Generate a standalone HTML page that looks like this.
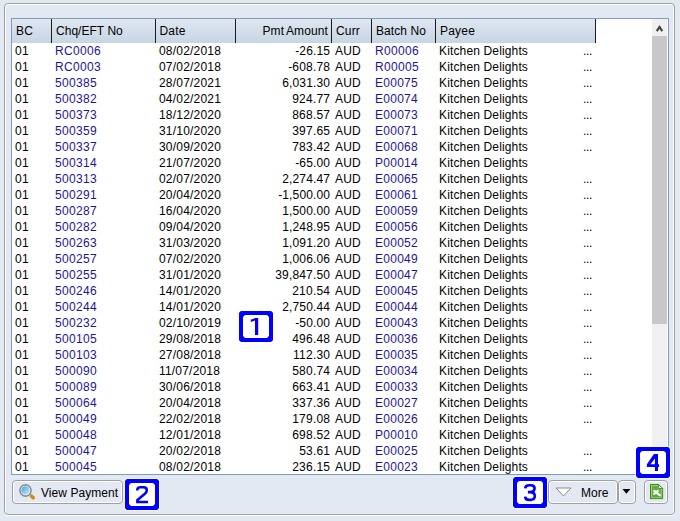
<!DOCTYPE html>
<html><head><meta charset="utf-8">
<style>
html,body{margin:0;padding:0;}
body{width:680px;height:521px;overflow:hidden;position:relative;background:#e3e9f2;font-family:"Liberation Sans",sans-serif;font-size:12px;color:#000;}
.abs{position:absolute;}
.panel{position:absolute;left:4px;top:3px;width:669px;height:510px;border:1px solid #a0a0a0;border-radius:4px;box-shadow:inset 1px 1px 0 #fff, inset -1px 0 0 #fff, 0 1px 0 #fff;}
.table{position:absolute;left:11px;top:18px;width:656px;height:455px;border:1px solid #7f9db9;background:#fff;}
.hdr{position:absolute;left:12px;top:19px;width:584px;height:24px;background:linear-gradient(#e0e7f0,#c6d5e4);}
.div{position:absolute;top:19px;width:1px;height:24px;background:#1c1c1c;}
.row{position:absolute;left:0;width:680px;height:16px;}
.row span{position:absolute;top:0;line-height:16px;white-space:nowrap;}
.hrow span{line-height:24px;}
.b{color:#1c1596;}
.sb{position:absolute;left:652px;top:19px;width:15px;height:455px;background:#f0f0f0;}
.thumb{position:absolute;left:652px;top:36px;width:15px;height:288px;background:#c8c8c8;}
.btn{position:absolute;top:480px;height:22px;border:1px solid #a0a0a0;border-radius:4px;box-shadow:inset 0 0 0 1px #fff;background:#e3e9f2;}
.lbl{position:absolute;top:481px;line-height:22px;white-space:nowrap;}
.badge{position:absolute;}
.bnum{position:absolute;width:34px;height:31px;text-align:center;line-height:31px;font-weight:bold;font-size:24px;color:#00f;}
</style></head><body>
<div class="panel"></div>
<div class="table"></div>
<div class="hdr"></div>
<div class="div" style="left:51px"></div>
<div class="div" style="left:155px"></div>
<div class="div" style="left:235px"></div>
<div class="div" style="left:331px"></div>
<div class="div" style="left:371px"></div>
<div class="div" style="left:435px"></div>
<div class="div" style="left:595px"></div>
<div class="row hrow" style="top:19px;height:24px">
<span style="left:16px;letter-spacing:0.165px;">BC</span><span style="left:56px;letter-spacing:0.031px;">Chq/EFT No</span><span style="left:159.5px;letter-spacing:0.163px;">Date</span><span style="right:352.002px;letter-spacing:-0.002px;word-spacing:-1px;letter-spacing:0.12px;">Pmt Amount</span><span style="left:336px;letter-spacing:0.167px;">Curr</span><span style="left:376px;letter-spacing:0.08px;">Batch No</span><span style="left:440px;letter-spacing:0.195px;">Payee</span>
</div>
<div class="row" style="top:43px"><span style="left:15px;letter-spacing:0.326px;">01</span><span class="b" style="left:55px;letter-spacing:0.329px;">RC0006</span><span style="left:159px;letter-spacing:0.194px;">08/02/2018</span><span style="right:349.838px;letter-spacing:0.162px;">-26.15</span><span style="left:335px;letter-spacing:0.221px;">AUD</span><span class="b" style="left:375px;letter-spacing:0.327px;">R00006</span><span style="left:439px;letter-spacing:0.143px;">Kitchen Delights</span><span style="left:583px;letter-spacing:-0.334px;">...</span></div><div class="row" style="top:59px"><span style="left:15px;letter-spacing:0.326px;">01</span><span class="b" style="left:55px;letter-spacing:0.329px;">RC0003</span><span style="left:159px;letter-spacing:0.194px;">07/02/2018</span><span style="right:349.814px;letter-spacing:0.186px;">-608.78</span><span style="left:335px;letter-spacing:0.221px;">AUD</span><span class="b" style="left:375px;letter-spacing:0.327px;">R00005</span><span style="left:439px;letter-spacing:0.143px;">Kitchen Delights</span><span style="left:583px;letter-spacing:-0.334px;">...</span></div><div class="row" style="top:75px"><span style="left:15px;letter-spacing:0.326px;">01</span><span class="b" style="left:55px;letter-spacing:0.326px;">500385</span><span style="left:159px;letter-spacing:0.194px;">28/07/2021</span><span style="right:349.839px;letter-spacing:0.161px;">6,031.30</span><span style="left:335px;letter-spacing:0.221px;">AUD</span><span class="b" style="left:375px;letter-spacing:0.271px;">E00075</span><span style="left:439px;letter-spacing:0.143px;">Kitchen Delights</span><span style="left:583px;letter-spacing:-0.334px;">...</span></div><div class="row" style="top:91px"><span style="left:15px;letter-spacing:0.326px;">01</span><span class="b" style="left:55px;letter-spacing:0.326px;">500382</span><span style="left:159px;letter-spacing:0.194px;">04/02/2021</span><span style="right:349.784px;letter-spacing:0.216px;">924.77</span><span style="left:335px;letter-spacing:0.221px;">AUD</span><span class="b" style="left:375px;letter-spacing:0.271px;">E00074</span><span style="left:439px;letter-spacing:0.143px;">Kitchen Delights</span><span style="left:583px;letter-spacing:-0.334px;">...</span></div><div class="row" style="top:107px"><span style="left:15px;letter-spacing:0.326px;">01</span><span class="b" style="left:55px;letter-spacing:0.326px;">500373</span><span style="left:159px;letter-spacing:0.194px;">18/12/2020</span><span style="right:349.784px;letter-spacing:0.216px;">868.57</span><span style="left:335px;letter-spacing:0.221px;">AUD</span><span class="b" style="left:375px;letter-spacing:0.271px;">E00073</span><span style="left:439px;letter-spacing:0.143px;">Kitchen Delights</span><span style="left:583px;letter-spacing:-0.334px;">...</span></div><div class="row" style="top:123px"><span style="left:15px;letter-spacing:0.326px;">01</span><span class="b" style="left:55px;letter-spacing:0.326px;">500359</span><span style="left:159px;letter-spacing:0.194px;">31/10/2020</span><span style="right:349.784px;letter-spacing:0.216px;">397.65</span><span style="left:335px;letter-spacing:0.221px;">AUD</span><span class="b" style="left:375px;letter-spacing:0.271px;">E00071</span><span style="left:439px;letter-spacing:0.143px;">Kitchen Delights</span><span style="left:583px;letter-spacing:-0.334px;">...</span></div><div class="row" style="top:139px"><span style="left:15px;letter-spacing:0.326px;">01</span><span class="b" style="left:55px;letter-spacing:0.326px;">500337</span><span style="left:159px;letter-spacing:0.194px;">30/09/2020</span><span style="right:349.784px;letter-spacing:0.216px;">783.42</span><span style="left:335px;letter-spacing:0.221px;">AUD</span><span class="b" style="left:375px;letter-spacing:0.271px;">E00068</span><span style="left:439px;letter-spacing:0.143px;">Kitchen Delights</span><span style="left:583px;letter-spacing:-0.334px;">...</span></div><div class="row" style="top:155px"><span style="left:15px;letter-spacing:0.326px;">01</span><span class="b" style="left:55px;letter-spacing:0.326px;">500314</span><span style="left:159px;letter-spacing:0.194px;">21/07/2020</span><span style="right:349.838px;letter-spacing:0.162px;">-65.00</span><span style="left:335px;letter-spacing:0.221px;">AUD</span><span class="b" style="left:375px;letter-spacing:0.271px;">P00014</span><span style="left:439px;letter-spacing:0.143px;">Kitchen Delights</span></div><div class="row" style="top:171px"><span style="left:15px;letter-spacing:0.326px;">01</span><span class="b" style="left:55px;letter-spacing:0.326px;">500313</span><span style="left:159px;letter-spacing:0.194px;">02/07/2020</span><span style="right:349.839px;letter-spacing:0.161px;">2,274.47</span><span style="left:335px;letter-spacing:0.221px;">AUD</span><span class="b" style="left:375px;letter-spacing:0.271px;">E00065</span><span style="left:439px;letter-spacing:0.143px;">Kitchen Delights</span><span style="left:583px;letter-spacing:-0.334px;">...</span></div><div class="row" style="top:187px"><span style="left:15px;letter-spacing:0.326px;">01</span><span class="b" style="left:55px;letter-spacing:0.326px;">500291</span><span style="left:159px;letter-spacing:0.194px;">20/04/2020</span><span style="right:349.856px;letter-spacing:0.144px;">-1,500.00</span><span style="left:335px;letter-spacing:0.221px;">AUD</span><span class="b" style="left:375px;letter-spacing:0.271px;">E00061</span><span style="left:439px;letter-spacing:0.143px;">Kitchen Delights</span><span style="left:583px;letter-spacing:-0.334px;">...</span></div><div class="row" style="top:203px"><span style="left:15px;letter-spacing:0.326px;">01</span><span class="b" style="left:55px;letter-spacing:0.326px;">500287</span><span style="left:159px;letter-spacing:0.194px;">16/04/2020</span><span style="right:349.839px;letter-spacing:0.161px;">1,500.00</span><span style="left:335px;letter-spacing:0.221px;">AUD</span><span class="b" style="left:375px;letter-spacing:0.271px;">E00059</span><span style="left:439px;letter-spacing:0.143px;">Kitchen Delights</span><span style="left:583px;letter-spacing:-0.334px;">...</span></div><div class="row" style="top:219px"><span style="left:15px;letter-spacing:0.326px;">01</span><span class="b" style="left:55px;letter-spacing:0.326px;">500282</span><span style="left:159px;letter-spacing:0.194px;">09/04/2020</span><span style="right:349.839px;letter-spacing:0.161px;">1,248.95</span><span style="left:335px;letter-spacing:0.221px;">AUD</span><span class="b" style="left:375px;letter-spacing:0.271px;">E00056</span><span style="left:439px;letter-spacing:0.143px;">Kitchen Delights</span><span style="left:583px;letter-spacing:-0.334px;">...</span></div><div class="row" style="top:235px"><span style="left:15px;letter-spacing:0.326px;">01</span><span class="b" style="left:55px;letter-spacing:0.326px;">500263</span><span style="left:159px;letter-spacing:0.194px;">31/03/2020</span><span style="right:349.839px;letter-spacing:0.161px;">1,091.20</span><span style="left:335px;letter-spacing:0.221px;">AUD</span><span class="b" style="left:375px;letter-spacing:0.271px;">E00052</span><span style="left:439px;letter-spacing:0.143px;">Kitchen Delights</span><span style="left:583px;letter-spacing:-0.334px;">...</span></div><div class="row" style="top:251px"><span style="left:15px;letter-spacing:0.326px;">01</span><span class="b" style="left:55px;letter-spacing:0.326px;">500257</span><span style="left:159px;letter-spacing:0.194px;">07/02/2020</span><span style="right:349.839px;letter-spacing:0.161px;">1,006.06</span><span style="left:335px;letter-spacing:0.221px;">AUD</span><span class="b" style="left:375px;letter-spacing:0.271px;">E00049</span><span style="left:439px;letter-spacing:0.143px;">Kitchen Delights</span><span style="left:583px;letter-spacing:-0.334px;">...</span></div><div class="row" style="top:267px"><span style="left:15px;letter-spacing:0.326px;">01</span><span class="b" style="left:55px;letter-spacing:0.326px;">500255</span><span style="left:159px;letter-spacing:0.194px;">31/01/2020</span><span style="right:349.821px;letter-spacing:0.179px;">39,847.50</span><span style="left:335px;letter-spacing:0.221px;">AUD</span><span class="b" style="left:375px;letter-spacing:0.271px;">E00047</span><span style="left:439px;letter-spacing:0.143px;">Kitchen Delights</span><span style="left:583px;letter-spacing:-0.334px;">...</span></div><div class="row" style="top:283px"><span style="left:15px;letter-spacing:0.326px;">01</span><span class="b" style="left:55px;letter-spacing:0.326px;">500246</span><span style="left:159px;letter-spacing:0.194px;">14/01/2020</span><span style="right:349.784px;letter-spacing:0.216px;">210.54</span><span style="left:335px;letter-spacing:0.221px;">AUD</span><span class="b" style="left:375px;letter-spacing:0.271px;">E00045</span><span style="left:439px;letter-spacing:0.143px;">Kitchen Delights</span><span style="left:583px;letter-spacing:-0.334px;">...</span></div><div class="row" style="top:299px"><span style="left:15px;letter-spacing:0.326px;">01</span><span class="b" style="left:55px;letter-spacing:0.326px;">500244</span><span style="left:159px;letter-spacing:0.194px;">14/01/2020</span><span style="right:349.839px;letter-spacing:0.161px;">2,750.44</span><span style="left:335px;letter-spacing:0.221px;">AUD</span><span class="b" style="left:375px;letter-spacing:0.271px;">E00044</span><span style="left:439px;letter-spacing:0.143px;">Kitchen Delights</span><span style="left:583px;letter-spacing:-0.334px;">...</span></div><div class="row" style="top:315px"><span style="left:15px;letter-spacing:0.326px;">01</span><span class="b" style="left:55px;letter-spacing:0.326px;">500232</span><span style="left:159px;letter-spacing:0.194px;">02/10/2019</span><span style="right:349.838px;letter-spacing:0.162px;">-50.00</span><span style="left:335px;letter-spacing:0.221px;">AUD</span><span class="b" style="left:375px;letter-spacing:0.271px;">E00043</span><span style="left:439px;letter-spacing:0.143px;">Kitchen Delights</span><span style="left:583px;letter-spacing:-0.334px;">...</span></div><div class="row" style="top:331px"><span style="left:15px;letter-spacing:0.326px;">01</span><span class="b" style="left:55px;letter-spacing:0.326px;">500105</span><span style="left:159px;letter-spacing:0.194px;">29/08/2018</span><span style="right:349.784px;letter-spacing:0.216px;">496.48</span><span style="left:335px;letter-spacing:0.221px;">AUD</span><span class="b" style="left:375px;letter-spacing:0.271px;">E00036</span><span style="left:439px;letter-spacing:0.143px;">Kitchen Delights</span><span style="left:583px;letter-spacing:-0.334px;">...</span></div><div class="row" style="top:347px"><span style="left:15px;letter-spacing:0.326px;">01</span><span class="b" style="left:55px;letter-spacing:0.326px;">500103</span><span style="left:159px;letter-spacing:0.194px;">27/08/2018</span><span style="right:349.784px;letter-spacing:0.216px;">112.30</span><span style="left:335px;letter-spacing:0.221px;">AUD</span><span class="b" style="left:375px;letter-spacing:0.271px;">E00035</span><span style="left:439px;letter-spacing:0.143px;">Kitchen Delights</span><span style="left:583px;letter-spacing:-0.334px;">...</span></div><div class="row" style="top:363px"><span style="left:15px;letter-spacing:0.326px;">01</span><span class="b" style="left:55px;letter-spacing:0.326px;">500090</span><span style="left:159px;letter-spacing:0.194px;">11/07/2018</span><span style="right:349.784px;letter-spacing:0.216px;">580.74</span><span style="left:335px;letter-spacing:0.221px;">AUD</span><span class="b" style="left:375px;letter-spacing:0.271px;">E00034</span><span style="left:439px;letter-spacing:0.143px;">Kitchen Delights</span><span style="left:583px;letter-spacing:-0.334px;">...</span></div><div class="row" style="top:379px"><span style="left:15px;letter-spacing:0.326px;">01</span><span class="b" style="left:55px;letter-spacing:0.326px;">500089</span><span style="left:159px;letter-spacing:0.194px;">30/06/2018</span><span style="right:349.784px;letter-spacing:0.216px;">663.41</span><span style="left:335px;letter-spacing:0.221px;">AUD</span><span class="b" style="left:375px;letter-spacing:0.271px;">E00033</span><span style="left:439px;letter-spacing:0.143px;">Kitchen Delights</span><span style="left:583px;letter-spacing:-0.334px;">...</span></div><div class="row" style="top:395px"><span style="left:15px;letter-spacing:0.326px;">01</span><span class="b" style="left:55px;letter-spacing:0.326px;">500064</span><span style="left:159px;letter-spacing:0.194px;">20/04/2018</span><span style="right:349.784px;letter-spacing:0.216px;">337.36</span><span style="left:335px;letter-spacing:0.221px;">AUD</span><span class="b" style="left:375px;letter-spacing:0.271px;">E00027</span><span style="left:439px;letter-spacing:0.143px;">Kitchen Delights</span><span style="left:583px;letter-spacing:-0.334px;">...</span></div><div class="row" style="top:411px"><span style="left:15px;letter-spacing:0.326px;">01</span><span class="b" style="left:55px;letter-spacing:0.326px;">500049</span><span style="left:159px;letter-spacing:0.194px;">22/02/2018</span><span style="right:349.784px;letter-spacing:0.216px;">179.08</span><span style="left:335px;letter-spacing:0.221px;">AUD</span><span class="b" style="left:375px;letter-spacing:0.271px;">E00026</span><span style="left:439px;letter-spacing:0.143px;">Kitchen Delights</span><span style="left:583px;letter-spacing:-0.334px;">...</span></div><div class="row" style="top:427px"><span style="left:15px;letter-spacing:0.326px;">01</span><span class="b" style="left:55px;letter-spacing:0.326px;">500048</span><span style="left:159px;letter-spacing:0.194px;">12/01/2018</span><span style="right:349.784px;letter-spacing:0.216px;">698.52</span><span style="left:335px;letter-spacing:0.221px;">AUD</span><span class="b" style="left:375px;letter-spacing:0.271px;">P00010</span><span style="left:439px;letter-spacing:0.143px;">Kitchen Delights</span></div><div class="row" style="top:443px"><span style="left:15px;letter-spacing:0.326px;">01</span><span class="b" style="left:55px;letter-spacing:0.326px;">500047</span><span style="left:159px;letter-spacing:0.194px;">20/02/2018</span><span style="right:349.806px;letter-spacing:0.194px;">53.61</span><span style="left:335px;letter-spacing:0.221px;">AUD</span><span class="b" style="left:375px;letter-spacing:0.271px;">E00025</span><span style="left:439px;letter-spacing:0.143px;">Kitchen Delights</span><span style="left:583px;letter-spacing:-0.334px;">...</span></div><div class="row" style="top:459px"><span style="left:15px;letter-spacing:0.326px;">01</span><span class="b" style="left:55px;letter-spacing:0.326px;">500045</span><span style="left:159px;letter-spacing:0.194px;">08/02/2018</span><span style="right:349.784px;letter-spacing:0.216px;">236.15</span><span style="left:335px;letter-spacing:0.221px;">AUD</span><span class="b" style="left:375px;letter-spacing:0.271px;">E00023</span><span style="left:439px;letter-spacing:0.143px;">Kitchen Delights</span><span style="left:583px;letter-spacing:-0.334px;">...</span></div>
<div class="sb"></div>
<div class="thumb"></div>
<svg class="abs" style="left:652px;top:19px" width="15" height="17"><path d="M4.75 12.1 L7.5 7.9 L10.25 12.1" stroke="#454545" stroke-width="2.2" fill="none"/></svg>
<div class="btn" style="left:12px;width:109px"></div>
<div class="lbl" style="left:41px;top:481.5px;letter-spacing:0.05px">View Payment</div>
<svg class="abs" style="left:12px;top:476px" width="30" height="30">
<defs><linearGradient id="gl" x1="0" y1="0" x2="1" y2="1"><stop offset="0" stop-color="#3f9be3"/><stop offset="1" stop-color="#c9f3fc"/></linearGradient></defs>
<path d="M18.2 18.8 L20.2 20.8" stroke="#9aa3ab" stroke-width="2.4"/>
<path d="M19.6 20.2 L21.2 21.8" stroke="#d98a1a" stroke-width="3.6" stroke-linecap="round"/>
<circle cx="13.5" cy="14.5" r="5.6" fill="#fff" stroke="#8f8f8f" stroke-width="1.6"/>
<circle cx="13.5" cy="14.5" r="4.3" fill="url(#gl)"/>
</svg>
<div class="btn" style="left:548px;width:68px"></div>
<div class="lbl" style="left:581px;top:481.5px">More</div>
<svg class="abs" style="left:555px;top:487px" width="17" height="10"><path d="M1 1 L16 1 L8.5 9 Z" fill="#fff" stroke="#8a8a8a" stroke-width="1"/></svg>
<div class="btn" style="left:618px;width:16px"></div>
<svg class="abs" style="left:622px;top:489px" width="9" height="6"><path d="M0.5 0 L8.3 0 L4.4 4.8 Z" fill="#000"/></svg>
<div class="btn" style="left:644px;width:22px"></div>
<svg class="abs" style="left:649px;top:483px" width="16" height="18">
<defs><linearGradient id="xg" x1="0" y1="0" x2="0" y2="1"><stop offset="0" stop-color="#78bf52"/><stop offset="1" stop-color="#5aa238"/></linearGradient></defs>
<path d="M1.5 1.5 H9.6 L13.6 5.5 V15.6 H1.5 Z" fill="url(#xg)" stroke="#3b8524" stroke-width="1"/>
<path d="M2.5 2.5 H9.2 L12.6 5.9 V14.6 H2.5 Z" fill="none" stroke="#a2dc7e" stroke-width="0.8"/>
<rect x="3.2" y="3.2" width="5" height="3.5" fill="#5c9d3c" opacity="0.6"/>
<path d="M9.6 1.5 V5.5 H13.6 Z" fill="#fff" stroke="#3b8524" stroke-width="0.8"/>
<path d="M4.6 7.4 L10 11.6 M9.4 7.4 L4.4 11.4" stroke="#fff" stroke-width="2" fill="none"/>
<circle cx="10.6" cy="12" r="1.2" fill="#fff"/>
</svg>
<svg class="badge" style="left:238px;top:310px" width="36" height="33" viewBox="-1 -1 36 33"><path d="M2 0H32L34 2V29L32 31H2L0 29V2Z" fill="#00f" stroke="rgba(255,255,255,0.6)" stroke-width="2"/><path d="M2 0H32L34 2V29L32 31H2L0 29V2Z" fill="#00f"/><path d="M6 4H28L30 6V25L28 27H6L4 25V6Z" fill="#fff"/><path d="M16 7H19.2V24.1H16V9.6L11.8 11V8.6C13.6 8.2 15 7.8 16 7Z" fill="#00f"/></svg>
<svg class="badge" style="left:124px;top:478px" width="36" height="33" viewBox="-1 -1 36 33"><path d="M2 0H32L34 2V29L32 31H2L0 29V2Z" fill="#00f" stroke="rgba(255,255,255,0.6)" stroke-width="2"/><path d="M2 0H32L34 2V29L32 31H2L0 29V2Z" fill="#00f"/><path d="M6 4H28L30 6V25L28 27H6L4 25V6Z" fill="#fff"/><path d="M12.3 11.6V10.6Q12.6 8.3 15.5 8.3H18.6Q21.8 8.4 21.8 11.2Q21.8 13.2 19.6 15L12.4 21V23H23.1" fill="none" stroke="#00f" stroke-width="2.6"/></svg>
<svg class="badge" style="left:512px;top:476px" width="36" height="33" viewBox="-1 -1 36 33"><path d="M2 0H32L34 2V29L32 31H2L0 29V2Z" fill="#00f" stroke="rgba(255,255,255,0.6)" stroke-width="2"/><path d="M2 0H32L34 2V29L32 31H2L0 29V2Z" fill="#00f"/><path d="M6 4H28L30 6V25L28 27H6L4 25V6Z" fill="#fff"/><path d="M12.2 11.4Q12.4 8.3 16.2 8.3H17.6Q21.6 8.3 21.6 11.3Q21.6 14.9 17.2 15.1H14.9M17.2 15.1Q21.8 15.1 21.8 19Q21.8 22.9 17.2 22.9H16.2Q12.3 22.9 12.2 19.6" fill="none" stroke="#00f" stroke-width="2.6"/></svg>
<svg class="badge" style="left:635px;top:446px" width="36" height="33" viewBox="-1 -1 36 33"><path d="M2 0H32L34 2V29L32 31H2L0 29V2Z" fill="#00f" stroke="rgba(255,255,255,0.6)" stroke-width="2"/><path d="M2 0H32L34 2V29L32 31H2L0 29V2Z" fill="#00f"/><path d="M6 4H28L30 6V25L28 27H6L4 25V6Z" fill="#fff"/><path fill-rule="evenodd" d="M17.9 7H22V17.3H23.1V19.9H22V24.1H18.9V19.9H10.9V17.3ZM14.6 17.3H18.9V11.6Z" fill="#00f"/></svg>
</body></html>
